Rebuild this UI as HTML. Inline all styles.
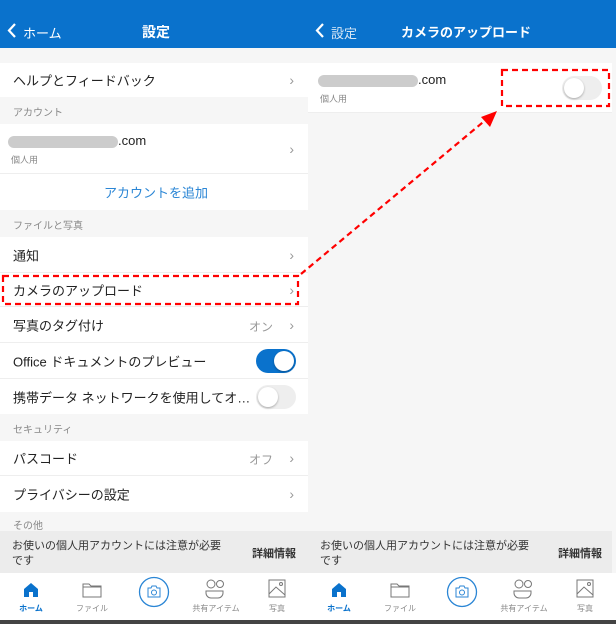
<!DOCTYPE html>
<html><head><meta charset="utf-8"><style>
*{margin:0;padding:0;box-sizing:border-box}
body{width:616px;height:624px;overflow:hidden;background:#f6f6f6;font-family:"Liberation Sans","Noto Sans CJK JP",sans-serif;position:relative}
.a{position:absolute}
.hdr{top:0;height:48px;background:#0a72cc;color:#fff}
.row{background:#fff;left:0;width:308px;font-size:13px;color:#222}
.row .t{position:absolute;left:13px;top:50%;transform:translateY(-50%);white-space:nowrap}
.chev{position:absolute;right:14px;top:50%;transform:translateY(-50%);color:#999;font-size:14px}
.sep{border-bottom:1px solid #eee}
.sec{font-size:10px;color:#888;left:13px}
.tog{position:absolute;right:12px;top:50%;transform:translateY(-50%);width:40px;height:24px;border-radius:12px}
.tog i{position:absolute;top:2px;width:20px;height:20px;border-radius:50%;background:#fff;box-shadow:0 1px 2px rgba(0,0,0,.3)}
.ban{top:531px;height:42px;background:#ececec;font-size:11px;color:#333}
.tab{top:573px;height:47px;background:#fff}
.tl{position:absolute;font-size:8px;color:#888;top:30px;transform:translateX(-50%);white-space:nowrap}
.blur{display:inline-block;width:110px;height:12px;border-radius:6px;background:#ccc;vertical-align:middle}
</style></head><body>
<!-- left header -->
<div class="a hdr" style="left:0;width:308px">
<svg class="a" style="left:7px;top:23px" width="10" height="15"><path d="M8 1L2 7.5L8 14" stroke="#fff" stroke-width="2.2" fill="none"/></svg>
<div class="a" style="left:23px;top:23px;font-size:13px">ホーム</div>
<div class="a" style="left:142px;top:22px;font-size:14px;font-weight:bold">設定</div>
</div>
<!-- right header -->
<div class="a hdr" style="left:308px;width:308px">
<svg class="a" style="left:7px;top:23px" width="10" height="15"><path d="M8 1L2 7.5L8 14" stroke="#fff" stroke-width="2.2" fill="none"/></svg>
<div class="a" style="left:23px;top:23px;font-size:13px;color:#d6e6f5">設定</div>
<div class="a" style="left:93px;top:22px;font-size:13px;font-weight:bold">カメラのアップロード</div>
</div>

<div class="a row" style="top:63px;height:34px"><span class="t">ヘルプとフィードバック</span><span class="chev">›</span></div>
<div class="a sec" style="top:104px">アカウント</div>
<div class="a row" style="top:124px;height:49px"><div class="a" style="left:8px;top:9px;font-size:13px"><span class="blur"></span>.com</div><div class="a" style="left:11px;top:29px;font-size:9px;color:#888">個人用</div><span class="chev">›</span></div>
<div class="a row" style="top:173px;height:37px;border-top:1px solid #eee"><span class="t" style="left:104px;color:#2b86d5">アカウントを追加</span></div>
<div class="a sec" style="top:217px">ファイルと写真</div>
<div class="a row sep" style="top:237px;height:36px"><span class="t">通知</span><span class="chev">›</span></div>
<div class="a row sep" style="top:273px;height:34px"><span class="t">カメラのアップロード</span><span class="chev">›</span></div>
<div class="a row sep" style="top:307px;height:36px"><span class="t">写真のタグ付け</span><span class="a" style="right:35px;top:11px;color:#999;font-size:12px">オン</span><span class="chev">›</span></div>
<div class="a row sep" style="top:343px;height:36px"><span class="t">Office ドキュメントのプレビュー</span><div class="tog" style="background:#0a72cc"><i style="right:2px"></i></div></div>
<div class="a row" style="top:379px;height:35px"><span class="t">携帯データ ネットワークを使用してオ…</span><div class="tog" style="background:#eee"><i style="left:2px"></i></div></div>
<div class="a sec" style="top:421px">セキュリティ</div>
<div class="a row sep" style="top:441px;height:35px"><span class="t">パスコード</span><span class="a" style="right:35px;top:10px;color:#999;font-size:12px">オフ</span><span class="chev">›</span></div>
<div class="a row" style="top:476px;height:36px"><span class="t">プライバシーの設定</span><span class="chev">›</span></div>
<div class="a sec" style="top:517px">その他</div>

<!-- right content -->
<div class="a" style="left:308px;top:63px;width:304px;height:50px;background:#fff;border-bottom:1px solid #eee">
<div class="a" style="left:10px;top:9px;font-size:13px;color:#222"><span class="blur" style="width:100px"></span>.com</div>
<div class="a" style="left:12px;top:29px;font-size:9px;color:#888">個人用</div>
<div class="tog" style="background:#eee;right:10px"><i style="left:2px"></i></div>
</div>

<!-- banners -->
<div class="a ban" style="left:0;width:308px"><div class="a" style="left:12px;top:8px;line-height:15px">お使いの個人用アカウントには注意が必要<br>です</div><div class="a" style="right:12px;top:14px;font-weight:bold">詳細情報</div></div>
<div class="a ban" style="left:308px;width:304px"><div class="a" style="left:12px;top:8px;line-height:15px">お使いの個人用アカウントには注意が必要<br>です</div><div class="a" style="right:10px;top:14px;font-weight:bold">詳細情報</div></div>

<!-- tabs -->
<div class="a tab" style="left:0;width:616px">
<div class="a" style="left:0;top:0;width:308px;height:47px">
<svg class="a" style="left:23px;top:9px" width="16" height="16"><path d="M1 7L8 1L15 7V15H10V10H6V15H1Z" fill="#0a72cc"/></svg><span class="tl" style="left:31px;color:#0a72cc;font-weight:bold">ホーム</span>
<svg class="a" style="left:82px;top:9px" width="20" height="16"><path d="M1 2H7L9 4H19V15H1Z M1 5H19" stroke="#777" fill="none"/></svg><span class="tl" style="left:92px">ファイル</span>
<svg class="a" style="left:138px;top:3px" width="32" height="32"><circle cx="16" cy="16" r="14.5" stroke="#2b86d5" stroke-width="1.3" fill="none"/><path d="M10 12H13L14 10H18L19 12H22V21H10Z" stroke="#2b86d5" fill="none"/><circle cx="16" cy="16.5" r="2.5" stroke="#2b86d5" fill="none"/></svg>
<svg class="a" style="left:205px;top:6px" width="20" height="20"><circle cx="6" cy="5" r="4" stroke="#777" fill="none"/><circle cx="15" cy="5" r="3.5" stroke="#777" fill="none"/><path d="M1 12H18V14A5 5 0 0 1 13 19H6A5 5 0 0 1 1 14Z" stroke="#777" fill="none"/></svg><span class="tl" style="left:216px">共有アイテム</span>
<svg class="a" style="left:268px;top:6px" width="18" height="19"><rect x="1" y="1" width="16" height="17" stroke="#777" fill="none"/><path d="M1 15L8 8L17 16" stroke="#777" fill="none"/><circle cx="13" cy="5" r="1.5" stroke="#777" fill="none"/></svg><span class="tl" style="left:277px">写真</span>
</div>
<div class="a" style="left:308px;top:0;width:308px;height:47px">
<svg class="a" style="left:23px;top:9px" width="16" height="16"><path d="M1 7L8 1L15 7V15H10V10H6V15H1Z" fill="#0a72cc"/></svg><span class="tl" style="left:31px;color:#0a72cc;font-weight:bold">ホーム</span>
<svg class="a" style="left:82px;top:9px" width="20" height="16"><path d="M1 2H7L9 4H19V15H1Z M1 5H19" stroke="#777" fill="none"/></svg><span class="tl" style="left:92px">ファイル</span>
<svg class="a" style="left:138px;top:3px" width="32" height="32"><circle cx="16" cy="16" r="14.5" stroke="#2b86d5" stroke-width="1.3" fill="none"/><path d="M10 12H13L14 10H18L19 12H22V21H10Z" stroke="#2b86d5" fill="none"/><circle cx="16" cy="16.5" r="2.5" stroke="#2b86d5" fill="none"/></svg>
<svg class="a" style="left:205px;top:6px" width="20" height="20"><circle cx="6" cy="5" r="4" stroke="#777" fill="none"/><circle cx="15" cy="5" r="3.5" stroke="#777" fill="none"/><path d="M1 12H18V14A5 5 0 0 1 13 19H6A5 5 0 0 1 1 14Z" stroke="#777" fill="none"/></svg><span class="tl" style="left:216px">共有アイテム</span>
<svg class="a" style="left:268px;top:6px" width="18" height="19"><rect x="1" y="1" width="16" height="17" stroke="#777" fill="none"/><path d="M1 15L8 8L17 16" stroke="#777" fill="none"/><circle cx="13" cy="5" r="1.5" stroke="#777" fill="none"/></svg><span class="tl" style="left:277px">写真</span>
</div>
</div>
<div class="a" style="left:0;top:620px;width:616px;height:4px;background:#444"></div>

<!-- annotations -->
<svg class="a" style="left:0;top:0" width="616" height="624">
<rect x="3" y="276" width="295" height="28" stroke="#f00" stroke-width="2.2" stroke-dasharray="6,4" fill="none"/>
<rect x="502" y="70" width="107" height="36" stroke="#f00" stroke-width="2.2" stroke-dasharray="6,4" fill="none"/>
<path d="M301 274L488 118" stroke="#f00" stroke-width="2.2" stroke-dasharray="6,4"/>
<path d="M497 111L481 117L490 127Z" fill="#f00"/>
</svg>
</body></html>
